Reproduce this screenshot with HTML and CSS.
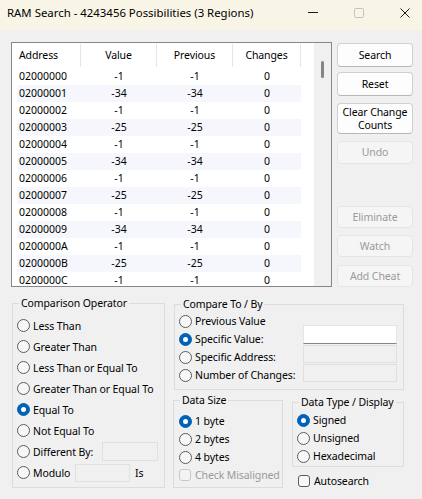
FILE: index.html
```html
<!DOCTYPE html>
<html>
<head>
<meta charset="utf-8">
<title>RAM Search</title>
<link rel="stylesheet" href="styles.css">
</head>
<body>
<div class="window">
  <div class="titlebar">
    <span class="title">RAM Search - 4243456 Possibilities (3 Regions)</span>
    <div class="controls">
      <span class="ctl"><svg width="10" height="10" viewBox="0 0 10 10"><path d="M0 4.5H10" stroke="#1a1a1a" stroke-width="1"/></svg></span>
      <span class="ctl"><svg width="10" height="10" viewBox="0 0 10 10"><rect x="0.5" y="0.5" width="9" height="9" rx="1" fill="none" stroke="#c2c2c2" stroke-width="1"/></svg></span>
      <span class="ctl"><svg width="10" height="10" viewBox="0 0 10 10"><path d="M0.5 0.5L9.5 9.5M9.5 0.5L0.5 9.5" stroke="#1a1a1a" stroke-width="1"/></svg></span>
    </div>
  </div>

  <div class="client">
    <div class="top">
      <div class="list">
        <div class="list-main">
          <div class="list-head">
            <div class="hcell c-addr">Address</div>
            <div class="hcell c-val">Value</div>
            <div class="hcell c-prev">Previous</div>
            <div class="hcell c-chg">Changes</div>
          </div>
          <div class="rows">
            <div class="row"><span class="r-addr">02000000</span><span class="r-val">-1</span><span class="r-prev">-1</span><span class="r-chg">0</span></div>
            <div class="row alt"><span class="r-addr">02000001</span><span class="r-val">-34</span><span class="r-prev">-34</span><span class="r-chg">0</span></div>
            <div class="row"><span class="r-addr">02000002</span><span class="r-val">-1</span><span class="r-prev">-1</span><span class="r-chg">0</span></div>
            <div class="row alt"><span class="r-addr">02000003</span><span class="r-val">-25</span><span class="r-prev">-25</span><span class="r-chg">0</span></div>
            <div class="row"><span class="r-addr">02000004</span><span class="r-val">-1</span><span class="r-prev">-1</span><span class="r-chg">0</span></div>
            <div class="row alt"><span class="r-addr">02000005</span><span class="r-val">-34</span><span class="r-prev">-34</span><span class="r-chg">0</span></div>
            <div class="row"><span class="r-addr">02000006</span><span class="r-val">-1</span><span class="r-prev">-1</span><span class="r-chg">0</span></div>
            <div class="row alt"><span class="r-addr">02000007</span><span class="r-val">-25</span><span class="r-prev">-25</span><span class="r-chg">0</span></div>
            <div class="row"><span class="r-addr">02000008</span><span class="r-val">-1</span><span class="r-prev">-1</span><span class="r-chg">0</span></div>
            <div class="row alt"><span class="r-addr">02000009</span><span class="r-val">-34</span><span class="r-prev">-34</span><span class="r-chg">0</span></div>
            <div class="row"><span class="r-addr">0200000A</span><span class="r-val">-1</span><span class="r-prev">-1</span><span class="r-chg">0</span></div>
            <div class="row alt"><span class="r-addr">0200000B</span><span class="r-val">-25</span><span class="r-prev">-25</span><span class="r-chg">0</span></div>
            <div class="row"><span class="r-addr">0200000C</span><span class="r-val">-1</span><span class="r-prev">-1</span><span class="r-chg">0</span></div>
          </div>
        </div>
        <div class="vscroll"><div class="thumb"></div></div>
      </div>

      <div class="buttons">
        <div class="btn b-search">Search</div>
        <div class="btn b-reset">Reset</div>
        <div class="btn b-clear">Clear Change<br>Counts</div>
        <div class="btn disabled b-undo">Undo</div>
        <div class="btn disabled b-elim">Eliminate</div>
        <div class="btn disabled b-watch">Watch</div>
        <div class="btn disabled b-cheat">Add Cheat</div>
      </div>
    </div>

    <div class="bottom">
      <fieldset class="group g-comp">
        <legend>Comparison Operator</legend>
        <div class="g-body comp-body">
          <div class="opt"><span class="radio"></span><span>Less Than</span></div>
          <div class="opt"><span class="radio"></span><span>Greater Than</span></div>
          <div class="opt"><span class="radio"></span><span>Less Than or Equal To</span></div>
          <div class="opt"><span class="radio"></span><span>Greater Than or Equal To</span></div>
          <div class="opt"><span class="radio on"></span><span>Equal To</span></div>
          <div class="opt"><span class="radio"></span><span>Not Equal To</span></div>
          <div class="opt"><span class="radio"></span><span class="lbl-diff">Different By:</span><span class="edit off e-diff"></span></div>
          <div class="opt"><span class="radio"></span><span class="lbl-mod">Modulo</span><span class="edit off e-mod"></span><span class="is">Is</span></div>
        </div>
      </fieldset>

      <div class="right">
        <fieldset class="group g-cmp">
          <legend>Compare To / By</legend>
          <div class="g-body cmp-body">
            <div class="cmp-opts">
              <div class="opt s18"><span class="radio"></span><span>Previous Value</span></div>
              <div class="opt s18"><span class="radio on"></span><span>Specific Value:</span></div>
              <div class="opt s18"><span class="radio"></span><span>Specific Address:</span></div>
              <div class="opt s18"><span class="radio"></span><span>Number of Changes:</span></div>
            </div>
            <div class="cmp-edits">
              <span class="edit on e-val"></span>
              <span class="edit off e-addr"></span>
              <span class="edit off e-num"></span>
            </div>
          </div>
        </fieldset>

        <div class="lower">
          <fieldset class="group g-size">
            <legend>Data Size</legend>
            <div class="g-body size-body">
              <div class="opt s18"><span class="radio on"></span><span>1 byte</span></div>
              <div class="opt s18"><span class="radio"></span><span>2 bytes</span></div>
              <div class="opt s18"><span class="radio"></span><span>4 bytes</span></div>
              <div class="opt s18 dis"><span class="check off"></span><span>Check Misaligned</span></div>
            </div>
          </fieldset>

          <div class="type-col">
            <fieldset class="group g-type">
              <legend>Data Type / Display</legend>
              <div class="g-body type-body">
                <div class="opt s18"><span class="radio on"></span><span>Signed</span></div>
                <div class="opt s18"><span class="radio"></span><span>Unsigned</span></div>
                <div class="opt s18"><span class="radio"></span><span>Hexadecimal</span></div>
              </div>
            </fieldset>
            <div class="opt s18 auto"><span class="check"></span><span>Autosearch</span></div>
          </div>
        </div>
      </div>
    </div>
  </div>
</div>
</body>
</html>
```

FILE: styles.css
```css
* { box-sizing: border-box; }
html, body { margin: 0; padding: 0; }
body {
  width: 422px;
  height: 499px;
  overflow: hidden;
  background: #f0f0f0;
  font-family: "Noto Sans", "Open Sans", sans-serif;
  font-size: 10.5px;
  letter-spacing: -0.1px;
  color: #000;
}
.window { width: 422px; height: 499px; overflow: hidden; background: #f0f0f0; }

/* title bar */
.titlebar {
  height: 30px;
  background: #f8f4e6;
  display: flex;
  align-items: flex-start;
  padding-left: 7px;
}
.title {
  flex: 1;
  font-size: 11.4px;
  letter-spacing: 0;
  line-height: 26px;
  white-space: nowrap;
}
.controls { display: flex; margin-right: -6px; }
.ctl {
  width: 46px;
  height: 25px;
  display: flex;
  align-items: center;
  justify-content: center;
}
.ctl svg { display: block; }

/* top area */
.top { display: flex; margin-top: 12px; }
.list {
  margin-left: 11px;
  width: 321px;
  height: 245px;
  border: 1px solid #828790;
  background: #fff;
  display: flex;
  overflow: hidden;
}
.list-main { width: 302px; flex: none; overflow: hidden; }
.list-head { display: flex; height: 25px; }
.hcell {
  height: 23px;
  margin: 1px 0;
  border-right: 1px solid #e5e5e5;
  line-height: 23px;
  text-align: center;
  white-space: nowrap;
}
.hcell.c-addr { width: 69px; text-align: left; padding-left: 7px; }
.hcell.c-val { width: 76px; }
.hcell.c-prev { width: 76px; }
.hcell.c-chg { width: 68px; }

.row {
  display: flex;
  margin-left: 5px;
  width: 284px;
  height: 17px;
  line-height: 17px;
  white-space: nowrap;
  letter-spacing: 0;
}
.row.alt { background: #f6f7fc; }
.r-addr { width: 64px; padding-left: 2px; }
.r-val, .r-prev { width: 76px; text-align: center; }
.r-chg { width: 68px; text-align: center; }

.vscroll { width: 17px; flex: none; background: #f0f0f0; }
.thumb {
  margin-left: 7px;
  margin-top: 18px;
  width: 3px;
  height: 17px;
  border-radius: 2px;
  background: #858585;
}

/* buttons */
.buttons { display: flex; flex-direction: column; width: 76px; margin-left: 5px; }
.btn {
  height: 24px;
  border: 1px solid #d0d0d0;
  border-bottom-color: #b8b8b8;
  border-radius: 4px;
  background: #fdfdfd;
  display: flex;
  align-items: center;
  justify-content: center;
  text-align: center;
  line-height: 13px;
  white-space: nowrap;
}
.btn.disabled {
  background: #f5f5f5;
  border-color: #e5e5e5;
  color: #9a9a9a;
}
.b-search { margin-top: 1px; }
.b-reset { margin-top: 5px; }
.b-clear { margin-top: 7px; height: 31px; }
.b-undo { margin-top: 7px; height: 23px; }
.b-elim { margin-top: 42px; height: 22px; }
.b-watch { margin-top: 7px; height: 22px; }
.b-cheat { margin-top: 8px; height: 22px; }

/* bottom area */
.bottom { display: flex; align-items: flex-start; margin-top: 9px; padding-left: 12px; }
.group {
  border: 1px solid #dcdcdc;
  margin: 0;
  padding: 0;
  min-width: 0;
}
.group legend {
  padding: 0 2px;
  margin-left: 6px;
  line-height: 14px;
  white-space: nowrap;
}
.g-comp { width: 153px; }
.comp-body { padding: 5px 4px 4px 4px; }

.opt {
  display: flex;
  align-items: center;
  height: 21px;
  white-space: nowrap;
}
.opt.s18 { height: 18px; }
.radio {
  width: 13px;
  height: 13px;
  flex: none;
  border-radius: 50%;
  border: 1px solid #5c5c5c;
  background: #f7f7f7;
  margin-right: 3px;
  position: relative;
}
.radio.on { background: #0062b9; border-color: #0062b9; }
.radio.on::after {
  content: "";
  position: absolute;
  left: 3px;
  top: 3px;
  width: 5px;
  height: 5px;
  border-radius: 50%;
  background: #fff;
}
.check {
  width: 12px;
  height: 12px;
  flex: none;
  border: 1px solid #5c5c5c;
  border-radius: 3px;
  background: #f7f7f7;
  margin-right: 4px;
}
.check.off { border-color: #c8c8c8; background: #f3f3f3; }
.opt.dis { color: #9a9a9a; }

.edit { display: block; flex: none; border: 1px solid #e0e0e0; background: #f0f0f0; }
.edit.on { background: #fff; border-color: #e5e5e5; border-bottom-color: #868686; }
.lbl-diff { width: 69px; }
.e-diff { width: 56px; height: 19px; }
.lbl-mod { width: 42px; }
.e-mod { width: 55px; height: 18px; }
.is { margin-left: 5px; }

.right { margin-left: 8px; margin-top: 1px; }
.g-cmp { width: 230px; margin-left: 1px; }
.cmp-body { display: flex; padding: 1px 6px 5px 4px; }
.cmp-edits { margin-left: auto; display: flex; flex-direction: column; padding-top: 13px; }
.e-val { width: 94px; height: 19px; }
.e-addr { width: 94px; height: 18px; margin-top: 1px; }
.e-num { width: 94px; height: 18px; margin-top: 1px; }

.lower { display: flex; align-items: flex-start; margin-top: 3px; }
.g-size { width: 110px; }
.size-body { padding: 5px 4px 3px 5px; }
.type-col { margin-left: 9px; margin-top: 2px; }
.g-type { width: 112px; }
.type-body { padding: 2px 4px 1px 4px; }
.auto { margin-top: 5px; margin-left: 6px; }
.auto .check { margin-right: 4px; }
```
